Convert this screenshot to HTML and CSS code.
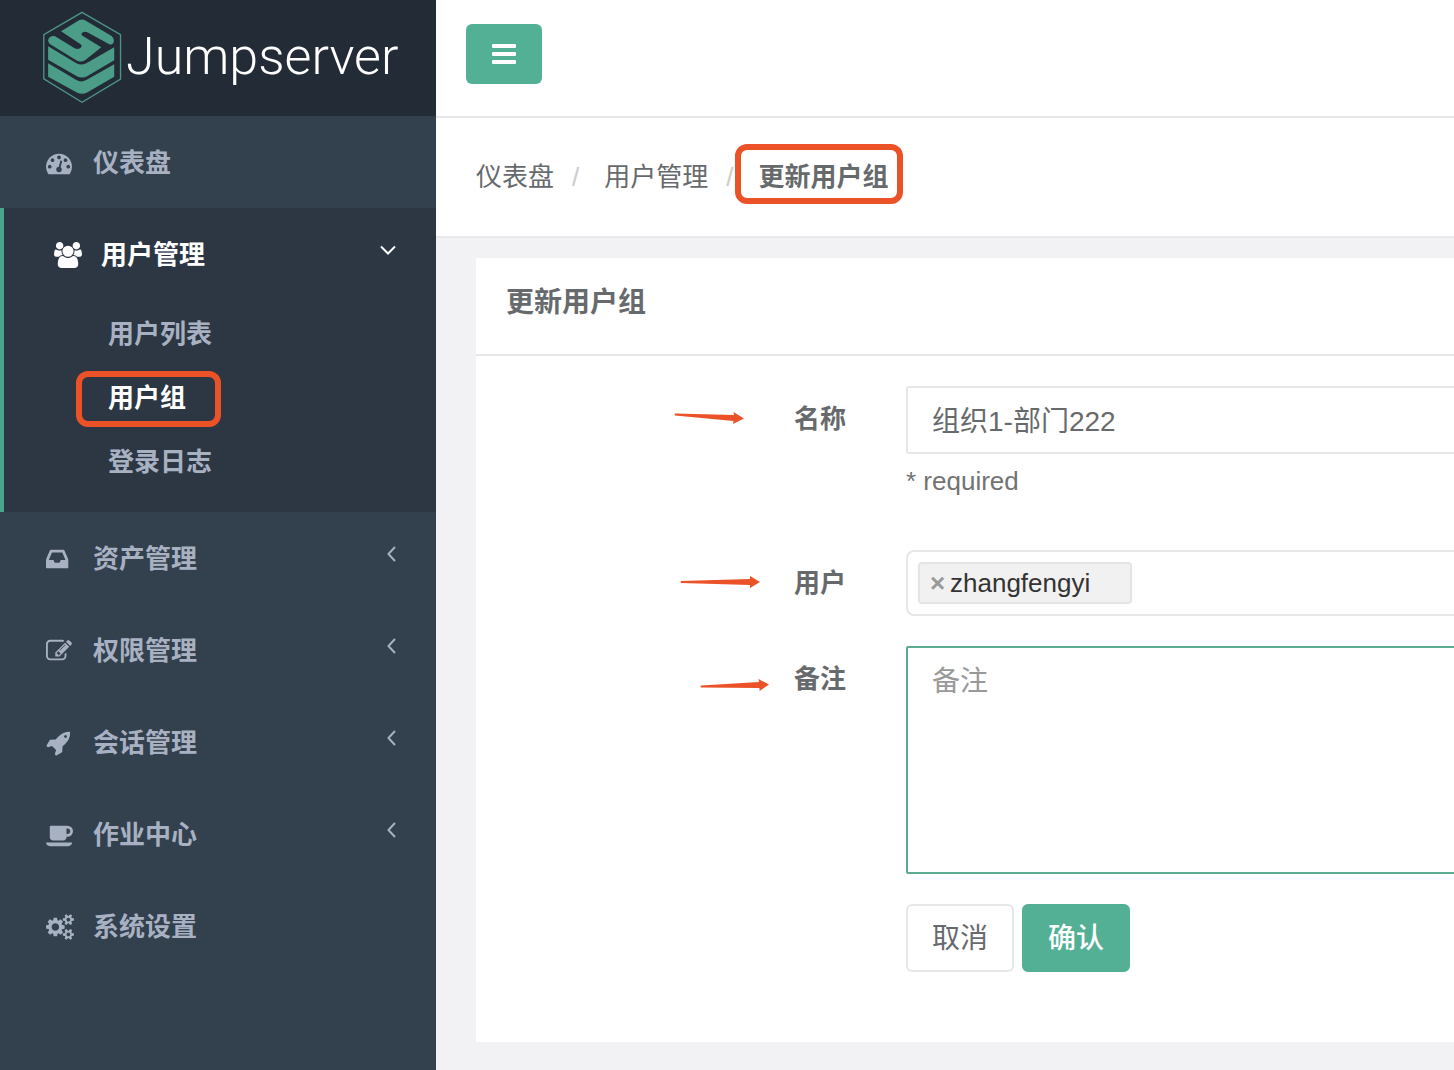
FILE: index.html
```html
<!DOCTYPE html>
<html lang="zh-CN">
<head>
<meta charset="utf-8">
<meta name="viewport" content="width=device-width, initial-scale=1">
<title>更新用户组 - Jumpserver</title>
<link rel="stylesheet" href="styles.css">
</head>
<body>
<div class="app">
  <aside class="sidebar">
    <a class="brand" href="#">
      <svg class="brand-mark" viewBox="36 33 238 280" aria-hidden="true">
        <path d="M155 37 271 104V238L155 308 40 237V104Z" fill="none" stroke="#4c9584" stroke-width="4"/>
        <g fill="#4b9d87">
          <path d="M92 94 146 61Q155 56 164 61L244 108Q251 113 251 123Q249 136 237 133L171 97Q166 95 160 96Q152 98 154 106L213 142 164 181Q152 189 139 182L58 132Q53 128 53 121Q57 106 74 109L134 146Q146 150 152 143Q156 138 152 134Z"/>
          <path d="M53 139 138 190Q152 198 168 190L252 142V181L169 230Q155 237 141 230L53 180Z"/>
          <path d="M53 190 138 241Q152 249 168 241L252 193V231L169 279Q155 286 141 279L53 231Z"/>
        </g>
      </svg>
      <span class="brand-name">Jumpserver</span>
    </a>
    <nav class="nav">
      <a class="nav-link" href="#">
        <svg class="icon" viewBox="0 0 1792 1792" aria-hidden="true"><path d="M384 1152q0-53-37.500-90.500t-90.500-37.500-90.500 37.500-37.500 90.500 37.500 90.500 90.500 37.500 90.500-37.500 37.500-90.500zm192-448q0-53-37.500-90.500t-90.500-37.500-90.500 37.500-37.500 90.500 37.500 90.500 90.500 37.500 90.500-37.500 37.500-90.500zm428 481l101-382q6-26-7.500-48.500t-38.500-29.500-48 6.500-30 39.500l-101 382q-60 5-107 43.500t-63 98.500q-20 77 20 146t117 89 146-20 89-117q16-60-6-117t-72-91zm660-33q0-53-37.500-90.500t-90.500-37.500-90.500 37.500-37.500 90.500 37.500 90.500 90.500 37.500 90.500-37.500 37.500-90.500zm-640-640q0-53-37.500-90.500t-90.500-37.500-90.500 37.500-37.500 90.500 37.500 90.500 90.500 37.500 90.500-37.500 37.500-90.500zm448 192q0-53-37.500-90.500t-90.500-37.500-90.500 37.500-37.500 90.500 37.500 90.500 90.500 37.500 90.500-37.500 37.500-90.500zm320 448q0 261-141 483-19 29-54 29h-1402q-35 0-54-29-141-221-141-483 0-182 71-348t191-286 286-191 348-71 348 71 286 191 191 286 71 348z"/></svg>
        <span>仪表盘</span>
      </a>
      <div class="nav-group">
        <a class="nav-link nav-link-open" href="#">
          <svg class="icon icon-wide" viewBox="0 0 1920 1792" aria-hidden="true"><path d="M593 896q-162 5-265 128h-134q-82 0-138-40.500t-56-118.500q0-353 124-353 6 0 43.500 21t97.500 42.500 119 21.500q67 0 133-23-5 37-5 66 0 139 81 256zm1071 637q0 120-73 189.500t-194 69.500h-874q-121 0-194-69.500t-73-189.500q0-53 3.500-103.500t14-109 26.500-108.500 43-97.500 62-81 85.500-53.500 111.500-20q10 0 43 21.500t73 48 107 48 135 21.500 135-21.500 107-48 73-48 43-21.500q61 0 111.500 20t85.500 53.500 62 81 43 97.500 26.500 108.500 14 109 3.500 103.500zm-1024-1277q0 106-75 181t-181 75-181-75-75-181 75-181 181-75 181 75 75 181zm704 384q0 159-112.500 271.500t-271.500 112.500-271.500-112.500-112.500-271.500 112.500-271.500 271.500-112.500 271.500 112.500 112.500 271.500zm576 225q0 78-56 118.500t-138 40.500h-134q-103-123-265-128 81-117 81-256 0-29-5-66 66 23 133 23 59 0 119-21.500t97.500-42.500 43.500-21q124 0 124 353zm-128-609q0 106-75 181t-181 75-181-75-75-181 75-181 181-75 181 75 75 181z"/></svg>
          <span>用户管理</span>
          <svg class="caret" viewBox="0 0 16 16" aria-hidden="true"><path d="M1 4.500 8 11.500 15 4.500"/></svg>
        </a>
        <ul class="subnav">
          <li><a class="subnav-link" href="#">用户列表</a></li>
          <li><a class="subnav-link subnav-current" href="#">用户组</a></li>
          <li><a class="subnav-link" href="#">登录日志</a></li>
        </ul>
      </div>
      <a class="nav-link" href="#">
        <svg class="icon" viewBox="128 0 1792 1792" aria-hidden="true"><path d="M1151 960h316q-1-3-2.500-8.500t-2.500-7.500l-212-496h-708l-212 496q-1 3-2.500 8.500t-2.500 7.500h316l95 192h320zm513 30v482q0 26-19 45t-45 19h-1408q-26 0-45-19t-19-45v-482q0-62 25-123l238-552q10-25 36.500-42t52.500-17h832q26 0 52.500 17t36.500 42l238 552q25 61 25 123z"/></svg>
        <span>资产管理</span>
        <svg class="caret" viewBox="0 0 16 16" aria-hidden="true"><path d="M15 1 8.500 8 15 15"/></svg>
      </a>
      <a class="nav-link" href="#">
        <svg class="icon" viewBox="0 0 1792 1792" aria-hidden="true"><path d="M888 1184l116-116-152-152-116 116v56h96v96h56zm440-720q-16-16-33 1l-350 350q-17 17-1 33t33-1l350-350q17-17 1-33zm80 594v190q0 119-84.500 203.500t-203.500 84.500h-832q-119 0-203.500-84.500t-84.500-203.500v-832q0-119 84.500-203.500t203.500-84.500h832q63 0 117 25 15 7 18 23 3 17-9 29l-49 49q-14 14-32 8-23-6-45-6h-832q-66 0-113 47t-47 113v832q0 66 47 113t113 47h832q66 0 113-47t47-113v-126q0-13 9-22l64-64q15-15 35-7t20 29zm-96-738l288 288-672 672h-288v-288zm444 132l-92 92-288-288 92-92q28-28 68-28t68 28l152 152q28 28 28 68t-28 68z"/></svg>
        <span>权限管理</span>
        <svg class="caret" viewBox="0 0 16 16" aria-hidden="true"><path d="M15 1 8.500 8 15 15"/></svg>
      </a>
      <a class="nav-link" href="#">
        <svg class="icon" viewBox="0 0 1792 1792" aria-hidden="true"><path d="M1440 448q0-40-28-68t-68-28-68 28-28 68 28 68 68 28 68-28 28-68zm224-288q0 249-75.500 430.500t-253.500 360.500q-81 80-195 176l-20 379q-2 16-16 26l-384 224q-7 4-16 4-12 0-23-9l-64-64q-13-14-8-32l85-276-281-281-276 85q-3 1-9 1-14 0-23-9l-64-64q-17-19-5-39l224-384q10-14 26-16l379-20q96-114 176-195 188-187 358-258t431-71q14 0 24 9.500t10 22.500z"/></svg>
        <span>会话管理</span>
        <svg class="caret" viewBox="0 0 16 16" aria-hidden="true"><path d="M15 1 8.500 8 15 15"/></svg>
      </a>
      <a class="nav-link" href="#">
        <svg class="icon icon-wide" viewBox="0 0 1920 1792" aria-hidden="true"><path d="M1664 640q0-80-56-136t-136-56h-64v384h64q80 0 136-56t56-136zm-1664 768h1792q0 106-75 181t-181 75h-1280q-106 0-181-75t-75-181zm1856-768q0 159-112.500 271.500t-271.500 112.500h-64v32q0 92-66 158t-158 66h-704q-92 0-158-66t-66-158v-736q0-26 19-45t45-19h1152q159 0 271.500 112.500t112.500 271.500z"/></svg>
        <span>作业中心</span>
        <svg class="caret" viewBox="0 0 16 16" aria-hidden="true"><path d="M15 1 8.500 8 15 15"/></svg>
      </a>
      <a class="nav-link" href="#">
        <svg class="icon icon-wide" viewBox="0 0 1920 1792" aria-hidden="true"><path d="M896 896q0-106-75-181t-181-75-181 75-75 181 75 181 181 75 181-75 75-181zm768 512q0-52-38-90t-90-38-90 38-38 90q0 53 37.500 90.500t90.500 37.500 90.500-37.500 37.500-90.500zm0-1024q0-52-38-90t-90-38-90 38-38 90q0 53 37.500 90.500t90.500 37.500 90.500-37.500 37.500-90.500zm-384 421v185q0 10-7 19.500t-16 10.500l-155 24q-11 35-32 76 34 48 90 115 7 11 7 20 0 12-7 19-23 30-82.500 89.500t-78.500 59.500q-11 0-21-7l-115-90q-37 19-77 31-11 108-23 155-7 24-30 24h-186q-11 0-20-7.500t-10-17.500l-23-153q-34-10-75-31l-118 89q-7 7-20 7-11 0-21-8-144-133-144-160 0-9 7-19 10-14 41-53t47-61q-23-44-35-82l-152-24q-10-1-17-9.500t-7-19.500v-185q0-10 7-19.500t16-10.500l155-24q11-35 32-76-34-48-90-115-7-11-7-20 0-12 7-20 22-30 82-89t79-59q11 0 21 7l115 90q34-18 77-32 11-108 23-154 7-24 30-24h186q11 0 20 7.500t10 17.500l23 153q34 10 75 31l118-89q8-7 20-7 11 0 21 8 144 133 144 160 0 8-7 19-12 16-42 54t-45 60q23 48 34 82l152 23q10 2 17 10.500t7 19.500zm640 533v140q0 16-149 31-12 27-30 52 51 113 51 138 0 4-4 7-122 71-124 71-8 0-46-47t-52-68q-20 2-30 2t-30-2q-14 21-52 68t-46 47q-2 0-124-71-4-3-4-7 0-25 51-138-18-25-30-52-149-15-149-31v-140q0-16 149-31 13-29 30-52-51-113-51-138 0-4 4-7 4-2 35-20t59-34 30-16q8 0 46 46.500t52 67.500q20-2 30-2t30 2q51-71 92-112l6-2q4 0 124 70 4 3 4 7 0 25-51 138 17 23 30 52 149 15 149 31zm0-1024v140q0 16-149 31-12 27-30 52 51 113 51 138 0 4-4 7-122 71-124 71-8 0-46-47t-52-68q-20 2-30 2t-30-2q-14 21-52 68t-46 47q-2 0-124-71-4-3-4-7 0-25 51-138-18-25-30-52-149-15-149-31v-140q0-16 149-31 13-29 30-52-51-113-51-138 0-4 4-7 4-2 35-20t59-34 30-16q8 0 46 46.500t52 67.500q20-2 30-2t30 2q51-71 92-112l6-2q4 0 124 70 4 3 4 7 0 25-51 138 17 23 30 52 149 15 149 31z"/></svg>
        <span>系统设置</span>
      </a>
    </nav>
  </aside>

  <main class="main">
    <header class="topbar">
      <button class="menu-toggle" type="button" aria-label="切换菜单">
        <svg viewBox="0 0 24 20" width="24" height="20" aria-hidden="true"><g fill="#fff"><rect width="24" height="4" rx="1"/><rect y="8" width="24" height="4" rx="1"/><rect y="16" width="24" height="4" rx="1"/></g></svg>
      </button>
    </header>
    <ol class="breadcrumb">
      <li><a href="#">仪表盘</a></li>
      <li><a href="#">用户管理</a></li>
      <li><strong class="crumb-current">更新用户组</strong></li>
    </ol>

    <section class="panel">
      <h1 class="panel-title">更新用户组</h1>
      <form class="form">
        <div class="row">
          <label class="label" for="name">名称
            <svg class="arrow arrow-name" viewBox="0 0 70 14" aria-hidden="true"><path d="M1 2.500 60 4 59.500 1 70 7.500 59 13 59.500 10 1 4.500Q0 3.500 1 2.500Z"/></svg>
          </label>
          <div class="field">
            <input class="text-input" id="name" type="text" value="组织1-部门222">
            <p class="help">* required</p>
          </div>
        </div>
        <div class="row">
          <label class="label" for="users">用户
            <svg class="arrow arrow-users" viewBox="0 0 80 14" aria-hidden="true"><path d="M1 6 70 4V1L80 7 70 13V10L1 8Q0 7 1 6Z"/></svg>
          </label>
          <div class="field">
            <div class="tag-box">
              <span class="tag"><button class="tag-remove" type="button" aria-label="移除">×</button>zhangfengyi</span>
              <input class="tag-search" id="users" type="text">
            </div>
          </div>
        </div>
        <div class="row">
          <label class="label" for="comment">备注
            <svg class="arrow arrow-comment" viewBox="0 0 70 14" aria-hidden="true"><path d="M1 7.500 59 4 58.500 1 69 6.500 59.500 13V10L1 9.500Q0 8.500 1 7.500Z"/></svg>
          </label>
          <div class="field">
            <textarea class="comment-input" id="comment" placeholder="备注"></textarea>
          </div>
        </div>
        <div class="actions">
          <button class="btn btn-plain" type="reset">取消</button>
          <button class="btn btn-primary" type="submit">确认</button>
        </div>
      </form>
    </section>
  </main>
</div>
</body>
</html>
```
FILE: styles.css
```css
:root {
  --green: #53b094;
  --mark: #ec5228;
  --line: #e6e7e8;
  --text: #676a6c;
}

* { box-sizing: border-box; }

body {
  margin: 0;
  background: #f2f2f4;
  color: var(--text);
  font: 26px/40px "Liberation Sans", "Noto Sans CJK SC", sans-serif;
}

a { color: inherit; text-decoration: none; }
ul, ol { margin: 0; padding: 0; list-style: none; }
input, textarea, button { font: inherit; color: inherit; }

.app { display: flex; min-height: 100vh; }

/* Sidebar */
.sidebar {
  flex: 0 0 436px;
  background: #33404d;
  color: #a7b1c2;
  font-weight: 700;
}

.brand {
  display: flex;
  gap: 4px;
  height: 116px;
  padding: 11px 0 0 42px;
  background: #232c36;
  color: #fff;
}

.brand-mark { flex: none; width: 80px; height: 93px; }

.brand-name {
  font: 300 52px/92px Roboto, sans-serif;
}

.nav-link {
  display: flex;
  align-items: center;
  height: 92px;
  padding: 2px 40px 0 46px;
}

.icon {
  width: 26px;
  height: 26px;
  margin-right: 21px;
  fill: currentColor;
}

.icon-wide { width: 28px; margin-right: 19px; }

.caret {
  width: 16px;
  height: 16px;
  margin: 0 0 10px auto;
  fill: none;
  stroke: currentColor;
  stroke-width: 2;
}

.nav-group {
  padding-bottom: 18px;
  border-left: 4px solid #4aa58a;
  background: #2d3744;
}

.nav-link-open { padding-left: 50px; color: #fff; }

.subnav { padding: 2px 0 0 104px; line-height: 64px; }
.subnav-link { display: inline-block; vertical-align: top; }
.subnav-current { position: relative; color: #fff; }

.subnav-current::after,
.crumb-current::after {
  content: "";
  position: absolute;
  border: 6px solid var(--mark);
  border-radius: 12px;
}

.subnav-current::after { inset: 5px -35px 3px -32px; }

/* Main column */
.main { flex: 1; min-width: 0; overflow: hidden; }

.topbar {
  height: 118px;
  padding: 24px 30px;
  border-bottom: 2px solid var(--line);
  background: #fff;
}

.menu-toggle {
  display: flex;
  align-items: center;
  justify-content: center;
  width: 76px;
  height: 60px;
  padding: 0;
  border: 0;
  border-radius: 6px;
  background: var(--green);
}

.breadcrumb {
  display: flex;
  height: 120px;
  padding: 39px 40px;
  border-bottom: 2px solid var(--line);
  background: #fff;
}

.breadcrumb li + li::before {
  content: "/";
  padding: 0 25px 0 18px;
  color: #ccc;
}

.crumb-current { position: relative; }
.crumb-current::after { inset: -18px -14px -12px -24px; }

.panel { margin: 20px 0 28px 40px; background: #fff; }

.panel-title {
  margin: 0;
  padding: 25px 30px 31px;
  border-bottom: 2px solid var(--line);
  font-size: 28px;
  line-height: 40px;
}

/* The fields run on past the right edge of the window */
.form {
  display: grid;
  gap: 30px;
  margin-right: -40px;
  padding: 30px 30px 70px;
}

.row { display: grid; grid-template-columns: 340px 1fr; gap: 60px; }

.label {
  position: relative;
  padding-top: 13px;
  font-weight: 700;
  text-align: right;
}

.arrow { position: absolute; height: 14px; fill: var(--mark); }
.arrow-name { top: 25px; right: 102px; width: 70px; }
.arrow-users { top: 25px; right: 86px; width: 80px; }
.arrow-comment { top: 32px; right: 76px; width: 70px; }

.text-input,
.comment-input {
  display: block;
  width: 100%;
  padding: 11px 24px 13px;
  border: 2px solid var(--line);
  border-radius: 2px;
  background: #fff;
  font-size: 28px;
  line-height: 40px;
  outline: 0;
}

.text-input { height: 68px; }

.comment-input {
  height: 228px;
  padding-top: 14px;
  border-color: #5aab92;
  resize: none;
}

.comment-input::placeholder { color: #999; opacity: 1; }

.help { margin: 7px 0 19px; color: #737373; }

.tag-box {
  display: flex;
  align-items: center;
  height: 66px;
  padding: 0 10px;
  border: 2px solid var(--line);
  border-radius: 8px;
}

.tag {
  display: flex;
  height: 42px;
  padding: 0 40px 0 10px;
  border: 2px solid #e4e4e4;
  border-radius: 4px;
  background: #f1f1f1;
  color: #333;
  line-height: 38px;
}

.tag-remove {
  width: 20px;
  padding: 0;
  border: 0;
  background: none;
  color: #999;
  font-weight: 700;
  text-align: left;
}

.tag-search { flex: 1; border: 0; background: none; outline: 0; }

.actions { display: flex; gap: 8px; padding-left: 400px; }

.btn {
  width: 108px;
  height: 68px;
  padding: 2px 0 0;
  border: 2px solid var(--line);
  border-radius: 6px;
  background: #fff;
  font-size: 28px;
}

.btn-primary {
  border-color: var(--green);
  background: var(--green);
  color: #fff;
  font-weight: 500;
}
```
